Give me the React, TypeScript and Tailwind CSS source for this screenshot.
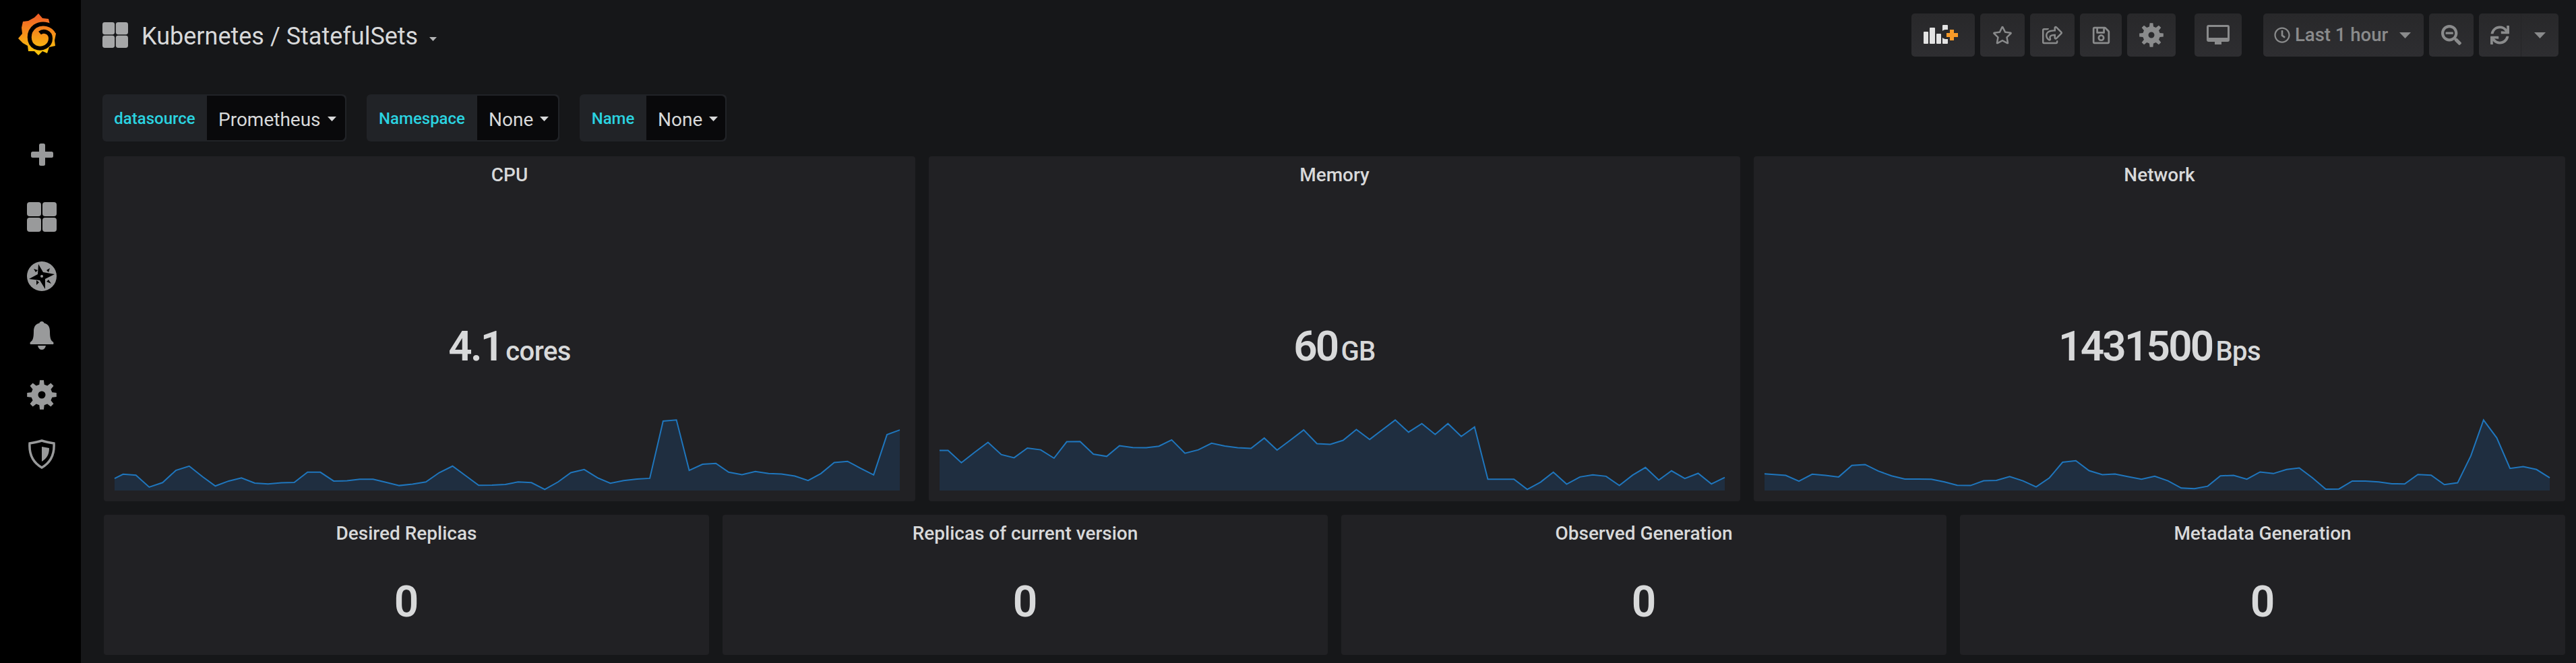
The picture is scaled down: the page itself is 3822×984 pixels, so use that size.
import type { ReactNode } from 'react';
import { FaRegStar, FaRegShareSquare, FaRegSave, FaRegClock, FaSearchMinus, FaSync } from 'react-icons/fa';

const cpu = '38,450 54,431 78,435 103,488 128,468 153,414 178,395 203,442 227,483 252,461 276,447 301,470 326,474 351,469 375,467 400,422 424,422 449,461 474,460 498,453 523,453 548,467 572,481 597,475 622,465 647,424 672,395 697,438 721,480 746,479 771,476 795,465 820,468 845,498 870,465 894,424 919,410 944,447 968,471 993,459 1018,452 1042,449 1067,196 1092,191 1116,414 1141,387 1166,383 1190,422 1215,433 1240,419 1265,428 1289,430 1314,439 1339,459 1363,428 1388,379 1413,374 1437,404 1462,434 1487,256 1511,235';
const memory = '30,326 46,326 71,380 96,334 121,290 146,344 170,358 195,315 220,323 245,360 269,287 294,286 319,342 344,352 368,305 393,313 418,314 442,307 466,279 491,338 516,323 541,294 566,306 590,314 615,317 640,271 664,324 689,280 714,235 739,296 764,299 788,281 813,233 838,277 862,234 886,191 911,245 936,207 961,255 985,207 1010,264 1035,222 1060,453 1085,453 1109,453 1134,498 1159,466 1183,422 1208,475 1233,443 1257,434 1282,440 1307,481 1332,435 1356,401 1381,457 1405,416 1430,450 1455,427 1480,474 1505,445';
const network = '36,429 76,436 101,462 126,431 151,436 176,443 201,392 226,388 251,417 276,438 301,452 326,452 351,453 376,465 400,480 425,481 450,460 474,458 499,441 524,460 549,487 574,447 599,378 624,371 649,415 674,433 698,430 723,442 748,453 773,440 798,460 823,492 848,495 873,484 897,438 922,436 947,453 972,421 997,428 1022,410 1046,403 1071,447 1096,497 1121,496 1146,461 1171,461 1196,465 1221,473 1245,474 1270,432 1295,435 1320,477 1345,469 1370,350 1394,191 1419,270 1444,405 1469,397 1494,410 1519,447';

const bigStats = [
  { title: 'CPU', value: '4.1', unit: 'cores', points: cpu },
  { title: 'Memory', value: '60', unit: 'GB', points: memory },
  { title: 'Network', value: '1431500', unit: 'Bps', points: network },
];

const smallStats = ['Desired Replicas', 'Replicas of current version', 'Observed Generation', 'Metadata Generation'];

const vars = [
  { label: 'datasource', value: 'Prometheus', labelW: 'w-[155px]', valueW: 'w-[205px]' },
  { label: 'Namespace', value: 'None', labelW: 'w-[164px]', valueW: 'w-[120px]' },
  { label: 'Name', value: 'None', labelW: 'w-[99px]', valueW: 'w-[117px]' },
];

// n teeth gear around 12,12
function gearPath(teeth: number) {
  const pts: string[] = [];
  for (let i = 0; i < teeth; i++) {
    const a = (i / teeth) * Math.PI * 2 - Math.PI / 2;
    const s = (Math.PI * 2) / teeth;
    [[-0.3, 8.6], [-0.17, 12], [0.17, 12], [0.3, 8.6]].forEach(([o, r]) => {
      const t = a + o * s;
      pts.push(`${(12 + r * Math.cos(t)).toFixed(2)} ${(12 + r * Math.sin(t)).toFixed(2)}`);
    });
  }
  return `M${pts.join('L')}Z M12 9a3 3 0 1 0 0 6a3 3 0 1 0 0-6Z`;
}

function Gear({ size }: { size: number }) {
  return (
    <svg width={size} height={size} viewBox="0 0 24 24" fill="currentColor">
      <path fillRule="evenodd" strokeLinejoin="round" d={gearPath(8)} />
    </svg>
  );
}

function GridIcon({ size }: { size: number }) {
  return (
    <svg width={size} height={size} viewBox="0 0 44 44" fill="currentColor">
      <rect x="0" y="0" width="21" height="21" rx="4" />
      <rect x="23" y="0" width="21" height="21" rx="4" />
      <rect x="0" y="23" width="21" height="21" rx="4" />
      <rect x="23" y="23" width="21" height="21" rx="4" />
    </svg>
  );
}

function Logo() {
  return (
    <svg width="62" height="66" viewBox="6 8 62 66">
      <defs>
        <linearGradient id="logoGrad" x1="0" y1="0" x2="0" y2="1">
          <stop offset="0" stopColor="#f05a28" />
          <stop offset="1" stopColor="#fbca0a" />
        </linearGradient>
      </defs>
      <path
        fill="url(#logoGrad)"
        d="M38 10L44 17L53 18L55 26L62 33L64 40L62 50L63 58L54 60L51 69L44 66L38 72L32 66L23 66L22 58L15 54L8 47L14 40L13 31L15 22L23 21L32 16Z"
      />
      <path
        fill="none"
        stroke="#000"
        strokeWidth="6"
        d="M66 38C60 26 44 22 33 29C22 37 22 54 33 60C44 65 56 58 56 47C56 38 46 34 40 39"
      />
    </svg>
  );
}

function Sidebar() {
  return (
    <aside className="flex w-[120px] shrink-0 flex-col items-center bg-black text-[#999a9b]">
      <div className="mt-[18px] mr-2 h-[66px]">
        <Logo />
      </div>
      <div className="ml-1 flex flex-col items-center pt-[129px]">
        <div className="flex h-[87px] items-start">
          <svg width="33" height="33" viewBox="0 0 33 33" fill="currentColor">
            <rect x="12" y="0" width="9" height="33" rx="2.5" />
            <rect x="0" y="12" width="33" height="9" rx="2.5" />
          </svg>
        </div>
        <div className="flex h-[88px] items-start">
          <GridIcon size={44} />
        </div>
        <div className="flex h-[89px] items-start">
          <svg width="44" height="44" viewBox="0 0 44 44">
            <circle cx="22" cy="22" r="22" fill="currentColor" />
            <path fill="#000" d="M17 4L24 16L41 19L27 26L27 41L19 28L3 26L16 19Z" />
            <path fill="#000" d="M10 11L16 13L13 16ZM34 10L32 16L29 13ZM36 33L29 30L32 27ZM14 35L14 28L18 31Z" />
            <circle cx="22" cy="22" r="2" fill="currentColor" />
          </svg>
        </div>
        <div className="flex h-[87px] items-start">
          <svg width="36" height="42" viewBox="0 0 36 42" fill="currentColor">
            <path d="M18 0C20 0 21 1 21.500 2.500C28 4 30 9 30 15C30 23 31 28 34 30C36 31 36 34 34 34H2C0 34 0 31 2 30C5 28 6 23 6 15C6 9 8 4 14.500 2.500C15 1 16 0 18 0Z" />
            <path d="M12 36H24C23 40 21 42 18 42C15 42 13 40 12 36Z" />
          </svg>
        </div>
        <div className="flex h-[88px] items-start">
          <Gear size={44} />
        </div>
        <div className="flex h-[60px] items-start">
          <svg width="40" height="44" viewBox="0 0 40 44">
            <path
              fill="none"
              stroke="currentColor"
              strokeWidth="3.500"
              d="M20 2C26 4 32 5 38 6C39 22 34 34 20 42C6 34 1 22 2 6C8 5 14 4 20 2Z"
            />
            <path fill="currentColor" d="M20 11L31 13C31 22 28 28 20 33Z" />
          </svg>
        </div>
      </div>
    </aside>
  );
}

function ToolButton({ className, children }: { className: string; children: ReactNode }) {
  return (
    <div className={`flex h-16 items-center justify-center rounded-[5px] bg-linear-to-b from-[#28282a] to-[#2e2e31] text-[#8a8b8c] ${className}`}>
      {children}
    </div>
  );
}

function Caret({ size = 'md' }: { size?: 'sm' | 'md' }) {
  return (
    <svg width={size === 'md' ? 17 : 11} height={size === 'md' ? 9 : 6} viewBox="0 0 17 9" fill="currentColor">
      <path d="M0 0H17L8.500 9Z" />
    </svg>
  );
}

function Navbar() {
  return (
    <header className="flex items-start justify-between pt-5 pr-[10px]">
      <div className="flex h-16 items-center">
        <div className="text-[#a6a7a8]">
          <GridIcon size={38} />
        </div>
        <h1 className="ml-5 pt-[3px] text-[36px] leading-none text-[#d8d9da]">Kubernetes / StatefulSets</h1>
        <div className="mt-3 ml-[17px] text-[#b3b4b5]">
          <Caret size="sm" />
        </div>
      </div>
      <div className="flex items-center gap-2">
        <ToolButton className="w-[94px]">
          <svg width="58" height="30" viewBox="0 0 58 30">
            <g fill="#e3e3e3">
              <rect x="0" y="10" width="7" height="18" rx="1" />
              <rect x="9" y="4" width="8" height="24" rx="1" />
              <rect x="19" y="13" width="7" height="15" rx="1" />
              <rect x="28" y="0" width="8" height="28" rx="1" />
            </g>
            <path d="M36 7h-2a5 5 0 0 0-2 14h4Z" fill="#28282a" />
            <path d="M39 7H45V12H51V18H45V23H39V18H34V12H39Z" fill="#f79a28" />
          </svg>
        </ToolButton>
        <ToolButton className="w-[66px]">
          <FaRegStar size={30} />
        </ToolButton>
        <ToolButton className="w-[66px]">
          <FaRegShareSquare size={30} />
        </ToolButton>
        <ToolButton className="w-[62px]">
          <FaRegSave size={29} />
        </ToolButton>
        <ToolButton className="w-[72px]">
          <Gear size={36} />
        </ToolButton>
        <ToolButton className="ml-5 w-[70px]">
          <svg width="34" height="30" viewBox="0 0 34 30" fill="currentColor">
            <path fillRule="evenodd" d="M3 0H31C33 0 34 1 34 3V22C34 24 33 25 31 25H3C1 25 0 24 0 22V3C0 1 1 0 3 0ZM3 3V19H31V3Z" />
            <rect x="12" y="25" width="10" height="4" />
          </svg>
        </ToolButton>
        <ToolButton className="ml-6 w-[238px] justify-start pl-4">
          <FaRegClock size={24} />
          <span className="ml-[7px] text-[27.5px] font-medium">Last 1 hour</span>
          <div className="ml-[17px]">
            <Caret />
          </div>
        </ToolButton>
        <ToolButton className="w-[66px]">
          <FaSearchMinus size={30} />
        </ToolButton>
        <div className="flex h-16 w-[118px] rounded-[5px] bg-linear-to-b from-[#28282a] to-[#2e2e31] text-[#8a8b8c]">
          <div className="flex w-[63px] items-center justify-center border-r border-[#252527]">
            <FaSync size={28} />
          </div>
          <div className="flex flex-1 items-center justify-center">
            <Caret />
          </div>
        </div>
      </div>
    </header>
  );
}

function Variables() {
  return (
    <div className="mt-14 flex gap-[30px]">
      {vars.map((v) => (
        <div key={v.label} className="flex h-[70px] rounded-md bg-[#212327] p-0.5 pl-0">
          <div className={`flex items-center justify-center pt-0.5 text-[24px] font-medium text-[#2bd3e0] ${v.labelW}`}>{v.label}</div>
          <div className={`flex items-center gap-2.5 rounded-r-md bg-[#09090b] pt-1.5 pl-[17px] text-[28px] text-[#d8d9da] ${v.valueW}`}>
            {v.value}
            <svg className="-mt-1" width="13" height="7" viewBox="0 0 17 9" fill="currentColor" preserveAspectRatio="none">
              <path d="M0 0H17L8.500 9Z" />
            </svg>
          </div>
        </div>
      ))}
    </div>
  );
}

function Sparkline({ points, left, right }: { points: string; left: number; right: number }) {
  const area = `${left},503 ${points} ${right},503`;
  return (
    <svg className="mt-auto mr-[23px] mb-4 ml-4 h-[105px] w-[calc(100%-39px)] overflow-visible" viewBox={`${left} 190 ${right - left} 313`} preserveAspectRatio="none">
      <polygon points={area} fill="#1f2e40" />
      <polyline points={points} fill="none" stroke="#1f76bd" strokeWidth="2" vectorEffect="non-scaling-stroke" />
    </svg>
  );
}

function PanelTitle({ children }: { children: ReactNode }) {
  return <div className="h-14 text-[28px] leading-[56px] font-medium text-[#d8d9da]">{children}</div>;
}

export default function App() {
  return (
    <div className="flex h-[984px] overflow-hidden bg-[#161719] font-['Roboto',sans-serif]">
      <Sidebar />
      <main className="flex-1 pr-4 pl-8">
        <Navbar />
        <Variables />
        <div className="mt-[22px] ml-0.5 flex flex-col gap-5">
          <div className="grid grid-cols-3 gap-5">
            {bigStats.map((s) => {
              const pts = s.points.split(' ');
              return (
                <section key={s.title} className="flex h-[512px] flex-col items-center rounded bg-[#212124]">
                  <PanelTitle>{s.title}</PanelTitle>
                  <div className="mt-[190px] flex h-[72px] items-baseline text-[62px] leading-[72px] font-semibold tracking-[-2.8px] text-[#d8d9da]">
                    {s.value}
                    <span className="ml-[5px] text-[40px] font-medium tracking-[-0.6px]">{s.unit}</span>
                  </div>
                  <Sparkline points={s.points} left={parseInt(pts[0])} right={parseInt(pts[pts.length - 1])} />
                </section>
              );
            })}
          </div>
          <div className="grid grid-cols-4 gap-5">
            {smallStats.map((t) => (
              <section key={t} className="flex h-[208px] flex-col items-center rounded bg-[#212124]">
                <PanelTitle>{t}</PanelTitle>
                <div className="mt-[38px] text-[64px] leading-[72px] font-semibold text-[#d8d9da]">0</div>
              </section>
            ))}
          </div>
        </div>
      </main>
    </div>
  );
}
